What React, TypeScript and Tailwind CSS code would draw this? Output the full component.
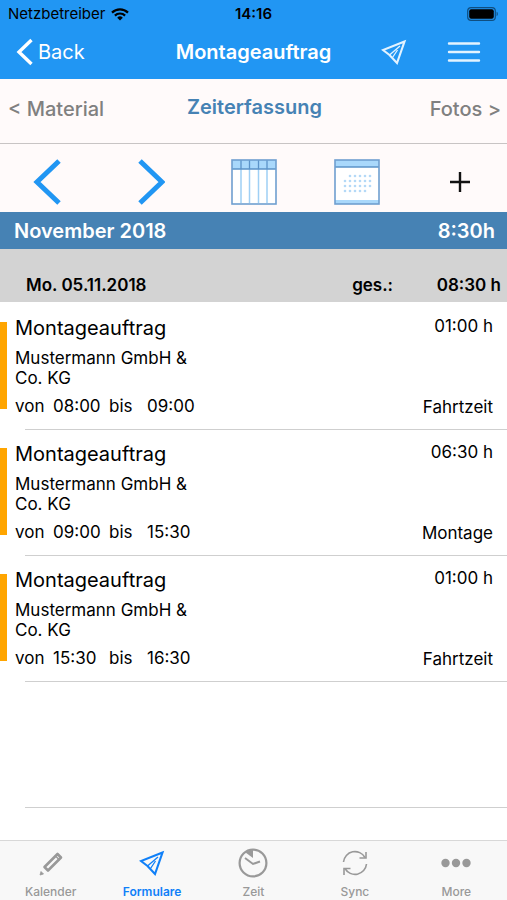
import { useState } from "react";

type Entry = {
  id: number;
  title: string;
  customer: string;
  from: string;
  to: string;
  duration: string;
  kind: string;
};

const entries: Entry[] = [
  { id: 1, title: "Montageauftrag", customer: "Mustermann GmbH & Co. KG", from: "08:00", to: "09:00", duration: "01:00 h", kind: "Fahrtzeit" },
  { id: 2, title: "Montageauftrag", customer: "Mustermann GmbH & Co. KG", from: "09:00", to: "15:30", duration: "06:30 h", kind: "Montage" },
  { id: 3, title: "Montageauftrag", customer: "Mustermann GmbH & Co. KG", from: "15:30", to: "16:30", duration: "01:00 h", kind: "Fahrtzeit" },
];

function WifiIcon() {
  return (
    <svg width="18" height="13" viewBox="0 0 18 13" fill="none" stroke="#000" strokeWidth="2.2">
      <path d="M1 4.6a11.4 11.4 0 0 1 16 0" />
      <path d="M3.9 7.6a7.2 7.2 0 0 1 10.2 0" />
      <path d="M9 12.4 6.2 9.7a4 4 0 0 1 5.6 0Z" fill="#000" stroke="none" />
    </svg>
  );
}

function BatteryIcon() {
  return (
    <svg width="32" height="14" viewBox="0 0 32 14">
      <rect x="0.7" y="0.7" width="27.6" height="12.6" rx="3.4" fill="none" stroke="#0f4e80" strokeWidth="1.2" />
      <rect x="2.2" y="2.2" width="24.6" height="9.6" rx="2" fill="#000" />
      <path d="M29.6 4.8c1.6.5 1.6 3.9 0 4.4Z" fill="#0f4e80" />
    </svg>
  );
}

function PlaneIcon() {
  return (
    <svg width="26" height="26" viewBox="0 0 26 26" fill="none" stroke="currentColor">
      <path d="M23.500 2.500 2 11 8.500 16 16 24Z" strokeWidth="2.1" />
      <path d="M19 7 8.500 16M16.500 11 11.500 18.500" strokeWidth="1.3" />
    </svg>
  );
}

function WeekIcon() {
  return (
    <svg width="46" height="46" viewBox="0 0 46 46">
      <rect x="1" y="1" width="44" height="44" fill="#fff" />
      <rect x="1" y="1" width="44" height="9" fill="#a9d8fb" />
      <path d="M10 10v34M18.500 10v34M27.500 10v34M36 10v34" stroke="#9fd0f5" strokeWidth="1.5" />
      <path d="M10 1v9M18.500 1v9M27.500 1v9M36 1v9M1 10h44" stroke="#5b93c9" strokeWidth="1.3" />
      <rect x="1" y="1" width="44" height="44" fill="none" stroke="#6f9fd0" strokeWidth="1.6" />
    </svg>
  );
}

function MonthIcon() {
  const rows = [
    { y: 17, xs: [16, 21, 26, 31, 36] },
    { y: 22, xs: [11, 16, 21, 26, 31, 36] },
    { y: 27, xs: [11, 16, 21, 26, 31, 36] },
    { y: 32, xs: [11, 16, 21, 26, 31] },
  ];
  return (
    <svg width="46" height="46" viewBox="0 0 46 46">
      <rect x="1" y="1" width="44" height="44" fill="#fff" />
      <rect x="1" y="1" width="44" height="7" fill="#a9d8fb" />
      <rect x="1" y="41" width="44" height="4" fill="#a9d8fb" />
      <path d="M1 8h44" stroke="#5b93c9" strokeWidth="1.3" />
      <rect x="1" y="1" width="44" height="44" fill="none" stroke="#6f9fd0" strokeWidth="1.6" />
      {rows.map((row) => row.xs.map((x) => <circle key={`${x}-${row.y}`} cx={x} cy={row.y} r="1.3" fill="#b4d9f7" />))}
    </svg>
  );
}

function PencilIcon() {
  return (
    <svg width="26" height="26" viewBox="0 0 26 26">
      <path d="M6.500 17 19.500 4 23 7.500 10 20.500Z" fill="none" stroke="currentColor" strokeWidth="2.6" strokeLinejoin="round" />
      <path d="M17 5.500 21.500 10" stroke="currentColor" strokeWidth="1.4" />
      <path d="M2 25 3 21.500 5.500 24Z" fill="currentColor" stroke="currentColor" strokeWidth="0.8" />
    </svg>
  );
}

function ClockIcon() {
  return (
    <svg width="30" height="30" viewBox="0 0 30 30" fill="none" stroke="currentColor">
      <circle cx="15" cy="15" r="13.400" strokeWidth="2.2" />
      <path d="M15 10V2A13 13 0 0 0 7.500 4.500Z" fill="currentColor" stroke="none" />
      <path d="M7 10 15 16 22 13.500" strokeWidth="2" />
    </svg>
  );
}

function SyncIcon() {
  return (
    <svg width="28" height="28" viewBox="0 0 28 28" fill="none" stroke="currentColor" strokeWidth="1.6">
      <path d="M2.500 13A11.500 11.500 0 0 1 24 8.500" />
      <path d="M25 3v6h-6.500" />
      <path d="M25.500 15A11.500 11.500 0 0 1 4 19.500" />
      <path d="M3 26v-6.500H9.500" />
    </svg>
  );
}

function MoreIcon() {
  return (
    <svg width="30" height="10" viewBox="0 0 30 10" fill="currentColor">
      <circle cx="4.500" cy="5" r="4.200" />
      <circle cx="15" cy="5" r="4.200" />
      <circle cx="25.500" cy="5" r="4.200" />
    </svg>
  );
}

const tabs = [
  { name: "Kalender", icon: <PencilIcon /> },
  { name: "Formulare", icon: <PlaneIcon /> },
  { name: "Zeit", icon: <ClockIcon /> },
  { name: "Sync", icon: <SyncIcon /> },
  { name: "More", icon: <MoreIcon /> },
];

export default function App() {
  const [activeTab, setActiveTab] = useState("Formulare");

  return (
    <div className="flex min-h-screen flex-col bg-white font-['Inter',sans-serif] text-black">
      <header className="bg-[#2196f3]">
        <div className="grid h-7 grid-cols-[1fr_auto_1fr] items-center px-2 text-[15px]">
          <div className="flex items-center gap-1.5">
            <span>Netzbetreiber</span>
            <WifiIcon />
          </div>
          <span className="font-semibold">14:16</span>
          <div className="flex justify-end">
            <BatteryIcon />
          </div>
        </div>
        <div className="grid h-[51px] grid-cols-[1fr_auto_1fr] items-center px-4 pb-1 text-xl text-white">
          <button className="flex items-center gap-1">
            <svg width="18" height="28" viewBox="0 0 18 28" fill="none" stroke="currentColor" strokeWidth="3.4">
              <path d="M15.500 2 3 14l12.500 12" />
            </svg>
            Back
          </button>
          <h1 className="font-semibold">Montageauftrag</h1>
          <div className="flex items-center justify-end gap-10 pr-2.5 text-[#e3f3ff]">
            <button aria-label="Senden">
              <PlaneIcon />
            </button>
            <button aria-label="Menü">
              <svg width="34" height="22" viewBox="0 0 34 22" stroke="currentColor" strokeWidth="2.4" strokeLinecap="round">
                <path d="M2 2.500h30M2 11h30M2 19.500h30" />
              </svg>
            </button>
          </div>
        </div>
      </header>

      <nav className="grid h-[65px] grid-cols-3 items-center border-b border-[#c8c4c4] bg-[#fffafa] pr-1.5 pb-1 pl-2 text-xl font-medium text-[#808080]">
        <a href="#material">&lt; Material</a>
        <a href="#zeiterfassung" className="pb-1 text-center font-semibold text-[#4682b4]">Zeiterfassung</a>
        <a href="#fotos" className="text-right">Fotos &gt;</a>
      </nav>

      <div className="flex h-[68px] items-center justify-between bg-[#fffafa] px-6 pt-2">
        <button aria-label="Zurück" className="flex w-[46px] justify-center">
          <svg width="30" height="46" viewBox="0 0 30 46" fill="none" stroke="#2196f3" strokeWidth="5">
            <path d="M27 2 5 23l22 21" />
          </svg>
        </button>
        <button aria-label="Weiter" className="flex w-[46px] justify-center">
          <svg width="30" height="46" viewBox="0 0 30 46" fill="none" stroke="#2196f3" strokeWidth="5">
            <path d="M5 2 27 23 5 44" />
          </svg>
        </button>
        <button aria-label="Woche">
          <WeekIcon />
        </button>
        <button aria-label="Monat">
          <MonthIcon />
        </button>
        <button aria-label="Hinzufügen" className="flex w-[46px] justify-center">
          <svg width="22" height="22" viewBox="0 0 22 22" stroke="#111" strokeWidth="2.4">
            <path d="M11 1v20M1 11h20" />
          </svg>
        </button>
      </div>

      <main className="flex-1">
        <div className="flex h-[37px] items-center justify-between bg-[#4682b4] pr-3 pl-3.5 text-xl font-semibold text-white">
          <h2>November 2018</h2>
          <span>8:30h</span>
        </div>
        <div className="flex h-[53px] items-end bg-[#d3d3d3] pr-1.5 pb-[5px] pl-[26px] text-[17px] leading-6 font-semibold">
          <h3 className="flex-1">Mo. 05.11.2018</h3>
          <span>ges.:</span>
          <span className="w-[108px] text-right">08:30 h</span>
        </div>

        <ul className="pt-0.5 text-[17px] leading-5">
          {entries.map((entry) => (
            <li key={entry.id}>
              <div className="flex h-[125px]">
                <div className="mt-[18px] h-[87px] w-[7px] bg-[#ffa500]" />
                <div className="flex flex-1 justify-between pt-3 pr-3.5 pb-3 pl-2">
                  <div>
                    <h4 className="text-xl leading-6">{entry.title}</h4>
                    <p className="mt-2 w-48">{entry.customer}</p>
                    <p className="mt-2 flex">
                      <span className="w-[38px]">von</span>
                      <span className="w-14">{entry.from}</span>
                      <span className="w-[38px]">bis</span>
                      <span>{entry.to}</span>
                    </p>
                  </div>
                  <div className="flex flex-col justify-between text-right">
                    <p>{entry.duration}</p>
                    <p>{entry.kind}</p>
                  </div>
                </div>
              </div>
              <div className="ml-[25px] border-b border-[#cfcfcf]" />
            </li>
          ))}
        </ul>
        <div className="ml-[25px] h-[126px] border-b border-[#cfcfcf]" />
      </main>

      <footer className="grid h-[60px] grid-cols-5 border-t border-[#d8d8d8] bg-[#f8f8f8]">
        {tabs.map((tab) => (
          <button
            key={tab.name}
            onClick={() => setActiveTab(tab.name)}
            className={`flex flex-col items-center text-xs ${activeTab === tab.name ? "font-semibold text-[#1080f8]" : "font-medium text-[#999999]"}`}
          >
            <span className="flex h-[43px] items-center">{tab.icon}</span>
            <span className="leading-4">{tab.name}</span>
          </button>
        ))}
      </footer>
    </div>
  );
}
